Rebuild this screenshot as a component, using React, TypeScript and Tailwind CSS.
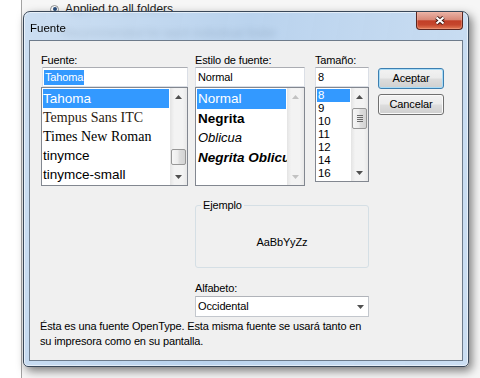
import React from 'react';

const Arrow: React.FC<{ up?: boolean; disabled?: boolean }> = ({ up, disabled }) => (
  <svg width="7" height="4" viewBox="0 0 7 4">
    <path d={up ? 'M0,4 L3.5,0 L7,4 Z' : 'M0,0 L7,0 L3.5,4 Z'} fill={disabled ? '#c2c2c2' : '#505050'} />
  </svg>
);

const ScrollBar: React.FC<{ thumb?: React.ReactNode; disabled?: boolean }> = ({ thumb, disabled }) => (
  <div className="w-[17px] flex flex-col bg-[linear-gradient(to_right,#e4e4e4,#f3f3f3_25%,#f3f3f3_75%,#e8e8e8)]">
    <div className="h-[17px] flex items-center justify-center">
      <Arrow up disabled={disabled} />
    </div>
    <div className="flex-1 flex flex-col">{thumb}</div>
    <div className="h-[17px] flex items-center justify-center">
      <Arrow disabled={disabled} />
    </div>
  </div>
);

const Button: React.FC<{ children: React.ReactNode; primary?: boolean }> = ({ children, primary }) => (
  <div
    className={`w-[66px] h-[21px] rounded-[3px] border flex items-center justify-center bg-[linear-gradient(to_bottom,#f2f2f2_0%,#ebebeb_48%,#dddddd_52%,#cfcfcf_100%)] ${
      primary
        ? 'border-[#3c7fb1] shadow-[inset_0_0_0_1px_#a9dcf7]'
        : 'border-[#707070] shadow-[inset_0_0_0_1px_#fafafa]'
    }`}
  >
    {children}
  </div>
);

export default function App() {
  return (
    <div className="relative w-[480px] h-[378px] overflow-hidden bg-white font-['Liberation_Sans',Arial,sans-serif] text-black">
      {/* Folder options window behind */}
      <div className="absolute left-[21px] top-0 right-0 bottom-0 border-l border-[#a3a3a3] bg-[#f6f6f6]">
        <div className="flex items-center gap-[6px] pl-[28px] pt-[2px] text-[12px] leading-[14px] text-[#1e1e1e]">
          <span className="w-[9px] h-[9px] rounded-full border border-[#8e8f8f] bg-white flex items-center justify-center">
            <span className="w-[4px] h-[4px] rounded-full bg-[#2b4f7c]" />
          </span>
          Applied to all folders
        </div>
        <div className="pl-[40px] mt-[10px] text-[12px] leading-[14px] text-[#2a2a2a]">
          Recommended for each individual folder
        </div>
      </div>

      {/* Fuente dialog */}
      <div className="absolute left-[23px] top-[11px] w-[446px] h-[356px] flex flex-col rounded-t-[7px] rounded-b-[5px] border border-[#3a4859] bg-[linear-gradient(100deg,rgba(198,219,241,0.88),rgba(176,205,236,0.86)_45%,rgba(199,220,242,0.9))] backdrop-blur-[3px] shadow-[inset_0_0_0_1px_rgba(255,255,255,0.55),3px_4px_10px_rgba(0,0,0,0.5)]">
        <div className="relative h-[28px] flex items-center pl-[6px] pt-[5px] text-[11.5px] text-black">
          Fuente
          <div className="absolute right-[5px] top-0 w-[47px] h-[18px] rounded-b-[4px] border border-t-0 border-[#5b2620] bg-[linear-gradient(to_bottom,#e9b3a6_0%,#d98a79_45%,#c23f27_52%,#c5462d_75%,#e27a55_100%)] shadow-[inset_0_0_0_1px_rgba(255,190,170,0.35)] flex items-center justify-center">
            <svg width="14" height="11" viewBox="0 0 14 11">
              <path d="M3.5,2.5 L10.5,8.5 M10.5,2.5 L3.5,8.5" stroke="#3b1610" strokeWidth="4" />
              <path d="M3.5,2.5 L10.5,8.5 M10.5,2.5 L3.5,8.5" stroke="#ffffff" strokeWidth="2.2" />
            </svg>
          </div>
        </div>

        <div className="flex-1 mx-[5px] mb-[5px] border border-[#6d7b8b] bg-[#f0f0f0] flex flex-col text-[11px] leading-[13px] tracking-[-0.15px]">
          {/* Top row: font, style, size, buttons */}
          <div className="flex pt-[13px] pl-[11px]">
            {/* Fuente */}
            <div className="w-[147px] flex flex-col">
              <span className="h-[13px]">Fuente:</span>
              <div className="ml-[1px] w-[146px] h-[20px] border border-[#dbdfe6] border-t-[#abadb3] bg-white flex items-center pl-[1px]">
                <span className="bg-[#3399ff] text-white px-[1px] leading-[15px]">Tahoma</span>
              </div>
              <div className="h-[99px] border border-[#828790] bg-white flex">
                <div className="flex-1 p-[1px] flex flex-col overflow-hidden whitespace-nowrap text-[13.5px] leading-[19px] tracking-normal">
                  <div className="h-[19px] bg-[#3399ff] text-white">Tahoma</div>
                  <div className="h-[19px] font-['Liberation_Serif',serif] text-[14px] text-[#2a1a10]">Tempus Sans ITC</div>
                  <div className="h-[19px] font-['Liberation_Serif',serif] text-[14px]">Times New Roman</div>
                  <div className="h-[19px]">tinymce</div>
                  <div className="h-[19px]">tinymce-small</div>
                </div>
                <ScrollBar
                  thumb={
                    <div className="mt-[44px] h-[16px] mx-[1px] rounded-[2px] border border-[#979797] bg-[linear-gradient(to_right,#f6f6f6,#ececec_45%,#dedede_55%,#d3d3d3)]" />
                  }
                />
              </div>
            </div>

            {/* Estilo de fuente */}
            <div className="ml-[7px] w-[110px] flex flex-col">
              <span className="h-[13px]">Estilo de fuente:</span>
              <div className="h-[20px] border border-[#dbdfe6] border-t-[#abadb3] bg-white flex items-center pl-[2px]">
                Normal
              </div>
              <div className="h-[99px] border border-[#828790] bg-white flex">
                <div className="flex-1 p-[1px] flex flex-col overflow-hidden whitespace-nowrap text-[13.5px] leading-[19.5px] tracking-normal">
                  <div className="h-[19.5px] pl-[1px] bg-[#3399ff] text-white">Normal</div>
                  <div className="h-[19.5px] pl-[1px] font-bold">Negrita</div>
                  <div className="h-[19.5px] pl-[1px] italic text-[13px]">Oblicua</div>
                  <div className="h-[19.5px] pl-[1px] font-bold italic">Negrita Oblicua</div>
                </div>
                <ScrollBar disabled />
              </div>
            </div>

            {/* Tamaño */}
            <div className="ml-[10px] w-[54px] flex flex-col">
              <span className="h-[13px]">Tamaño:</span>
              <div className="h-[20px] border border-[#dbdfe6] border-t-[#abadb3] bg-white flex items-center pl-[2px]">
                8
              </div>
              <div className="h-[95px] border border-[#828790] bg-white flex">
                <div className="flex-1 p-[1px] flex flex-col overflow-hidden text-[11.5px] leading-[13px]">
                  <div className="h-[13px] pl-[1px] bg-[#3399ff] text-white">8</div>
                  <div className="h-[13px] pl-[1px]">9</div>
                  <div className="h-[13px] pl-[1px]">10</div>
                  <div className="h-[13px] pl-[1px]">11</div>
                  <div className="h-[13px] pl-[1px]">12</div>
                  <div className="h-[13px] pl-[1px]">14</div>
                  <div className="h-[13px] pl-[1px]">16</div>
                </div>
                <ScrollBar
                  thumb={
                    <div className="mt-[3px] h-[21px] mx-[1px] rounded-[2px] border border-[#979797] bg-[linear-gradient(to_right,#f6f6f6,#ececec_45%,#dedede_55%,#d3d3d3)] flex flex-col items-center justify-center gap-[1px]">
                      <div className="w-[6px] h-[1px] bg-[#6a6a6a]" />
                      <div className="w-[6px] h-[1px] bg-[#6a6a6a]" />
                      <div className="w-[6px] h-[1px] bg-[#6a6a6a]" />
                      <div className="w-[6px] h-[1px] bg-[#6a6a6a]" />
                    </div>
                  }
                />
              </div>
            </div>

            {/* Buttons */}
            <div className="ml-[9px] mt-[14px] flex flex-col gap-[5px]">
              <Button primary>Aceptar</Button>
              <Button>Cancelar</Button>
            </div>
          </div>

          {/* Sample, script */}
          <div className="ml-[165px] w-[174px] mt-[13px] flex flex-col">
            <fieldset className="h-[69px] border border-[#d5dfe5] rounded-[3px]">
              <legend className="ml-[5px] px-[2px]">Ejemplo</legend>
              <div className="flex justify-center pt-[24px]">AaBbYyZz</div>
            </fieldset>
            <span className="mt-[14px] h-[13px]">Alfabeto:</span>
            <div className="mt-[1px] h-[21px] border border-[#c3c7cd] border-t-[#b0b3b9] bg-white flex items-center justify-between pl-[2px] pr-[4px]">
              <span>Occidental</span>
              <Arrow disabled={false} />
            </div>
          </div>

          <p className="mt-[2px] pl-[10px] leading-[15px]">
            Ésta es una fuente OpenType. Esta misma fuente se usará tanto en
            <br />
            su impresora como en su pantalla.
          </p>
        </div>
      </div>
    </div>
  );
}
